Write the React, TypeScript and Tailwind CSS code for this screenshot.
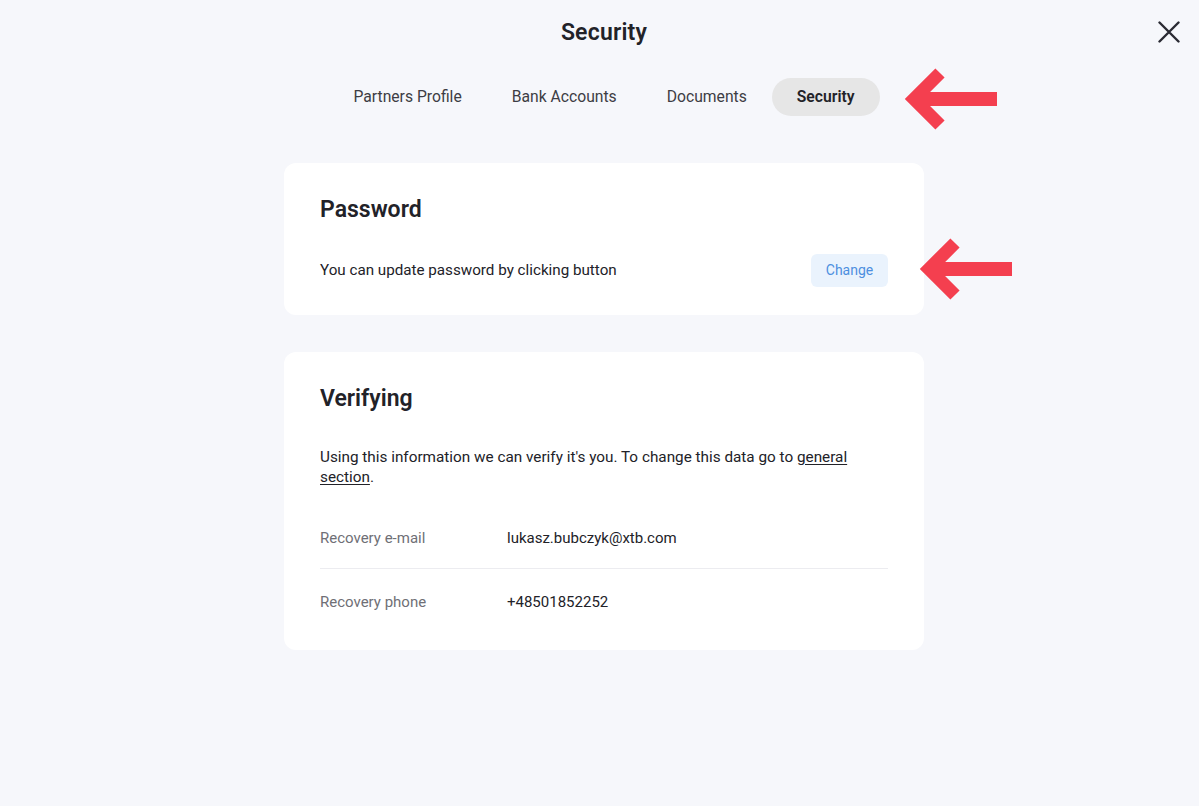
const tabs = ['Partners Profile', 'Bank Accounts', 'Documents', 'Security'];

// red annotation arrow pointing left
function Arrow() {
  return (
    <svg width="94" height="62" viewBox="0 0 94 62" className="overflow-visible">
      <path d="M35 5 L9 31 L35 57" fill="none" stroke="#f43f4f" strokeWidth="13" strokeLinejoin="miter" strokeLinecap="butt" />
      <path d="M10 31 L92 31" fill="none" stroke="#f43f4f" strokeWidth="14" />
    </svg>
  );
}

export default function App() {
  return (
    <div className="relative w-full h-[806px] bg-[#f6f7fb] text-[#1f1f24] font-['Roboto',sans-serif]">
      <div className="grid grid-cols-[1fr_auto_1fr] items-start pl-[9px]">
        <div />
        <h1 className="pt-[19px] text-[23px] leading-[28px] font-semibold text-[#222228] tracking-[0.2px]">Security</h1>
        <div className="flex justify-end h-0 pt-[21px] pr-[19px]">
          <svg width="22" height="22" viewBox="0 0 22 22" className="shrink-0">
            <path d="M1.5 1.5 L20.5 20.5 M20.5 1.5 L1.5 20.5" stroke="#2a2a33" strokeWidth="2.4" strokeLinecap="round" />
          </svg>
        </div>
      </div>

      <div className="flex flex-col items-center pl-[9px]">
        <div className="relative mt-[31px] flex">
          {tabs.map((t) => (
            <div
              key={t}
              className={
                t === 'Security'
                  ? 'h-[38px] px-[25px] flex items-center rounded-full bg-[#e6e6e6] text-[15.7px] font-semibold text-[#222228]'
                  : 'h-[38px] px-[25px] flex items-center text-[15.7px] text-[#3d3d44]'
              }
            >
              {t}
            </div>
          ))}
          <div className="absolute left-[calc(100%+25px)] top-[-10px]">
            <Arrow />
          </div>
        </div>

        <div className="relative mt-[47px] w-[640px] rounded-xl bg-white px-9 pt-8 pb-7">
          <h2 className="text-[23px] leading-[30px] font-semibold text-[#222228]">Password</h2>
          <div className="mt-[29px] flex items-center justify-between">
            <p className="text-[15.2px] text-[#222228]">You can update password by clicking button</p>
            <button className="h-[33px] w-[77px] rounded-md bg-[#eaf3fd] text-[14px] text-[#4d8fe0]">Change</button>
          </div>
          <div className="absolute left-[636px] top-[75px]">
            <Arrow />
          </div>
        </div>

        <div className="mt-[37px] w-[640px] rounded-xl bg-white px-9 pt-8 pb-[15px]">
          <h2 className="text-[23px] leading-[30px] font-semibold text-[#222228]">Verifying</h2>
          <p className="mt-[33px] text-[15.3px] leading-[20px] text-[#222228]">
            Using this information we can verify it's you. To change this data go to{' '}
            <span className="underline underline-offset-2">general section</span>.
          </p>
          <div className="mt-[22px] h-[60px] flex items-center border-b border-[#ececf0] text-[15px]">
            <span className="w-[187px] text-[#6f6f76]">Recovery e-mail</span>
            <span className="text-[#222228]">lukasz.bubczyk@xtb.com</span>
          </div>
          <div className="h-[66px] flex items-center text-[15px]">
            <span className="w-[187px] text-[#6f6f76]">Recovery phone</span>
            <span className="text-[#222228]">+48501852252</span>
          </div>
        </div>
      </div>
    </div>
  );
}
